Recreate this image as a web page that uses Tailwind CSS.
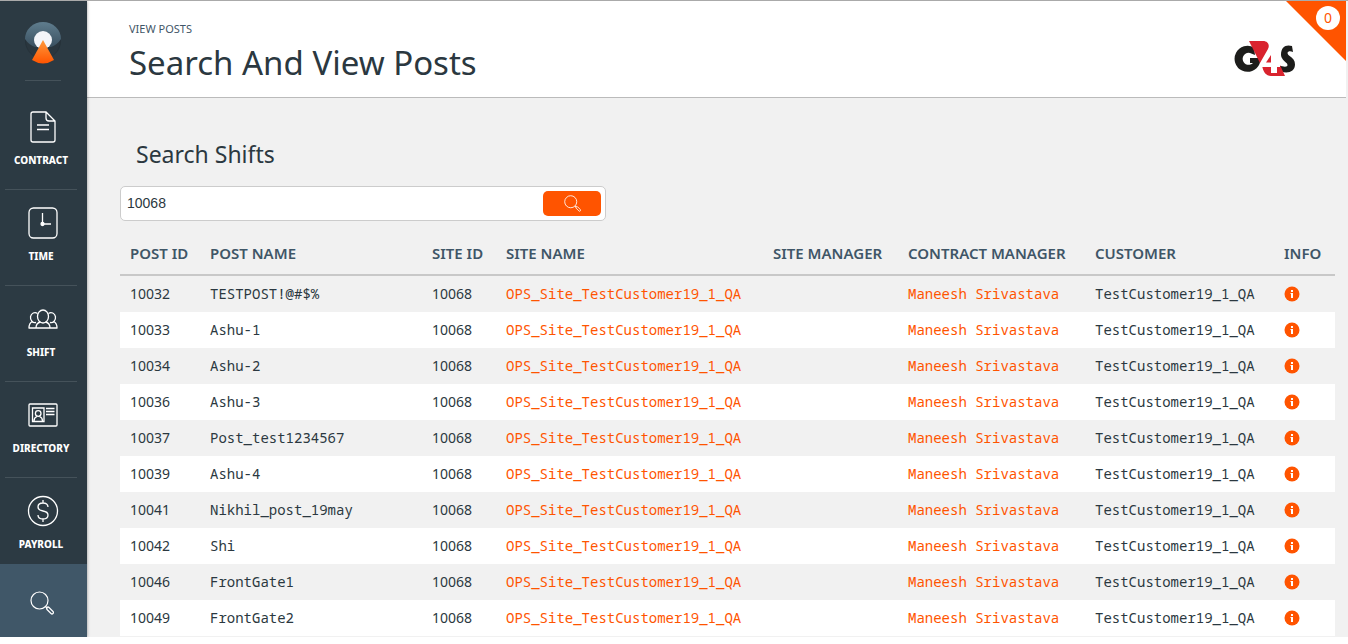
<!DOCTYPE html>
<html lang="en">
<head>
<meta charset="utf-8">
<title>Search And View Posts</title>
<script src="https://cdn.jsdelivr.net/npm/@tailwindcss/browser@4"></script>
</head>
<body class="h-screen overflow-hidden bg-white font-['Noto_Sans',sans-serif] text-[#2b3840]">
<svg class="hidden">
  <symbol id="search" viewBox="0 0 24 24"><g fill="none" stroke="currentColor" stroke-width="1.200"><circle cx="9.500" cy="9.500" r="8.500"/><path d="M15.500 15.500l2 2M17 18.500l4 4a1.300 1.300 0 0 0 2-2l-4-4a1.300 1.300 0 0 0-2 2z"/></g></symbol>
  <symbol id="info" viewBox="0 0 16 16"><circle cx="8" cy="8" r="7.500" fill="#ff5400"/><path fill="#fff" d="M7 4h2v2H7zM6.500 7H9v5H7V8h-.5z"/></symbol>
</svg>
<div class="flex h-[calc(100vh-7px)] overflow-hidden border-t border-[#aaaaaa] bg-[#f1f1f1]">
  <nav class="z-10 flex w-[87px] shrink-0 flex-col bg-[#2c3a43] text-[10px] font-extrabold text-white shadow-[0_0_3px_rgba(0,0,0,0.4)]">
    <a href="#" aria-label="Home" class="ml-[25px] flex h-20 w-9 flex-col items-center border-b border-[#45525a] pt-5">
      <svg class="h-11 w-9" viewBox="0 0 36 44">
        <defs>
          <linearGradient id="dome" x2="0" y2="1"><stop stop-color="#5f7d8e"/><stop offset="1" stop-color="#3a5060"/></linearGradient>
          <linearGradient id="beam" x2="0" y2="1"><stop stop-color="#ff9a3c"/><stop offset="1" stop-color="#ff5400"/></linearGradient>
        </defs>
        <circle cx="18" cy="20" r="17.500" fill="#2a363e" stroke="#26323a"/>
        <path d="M0 18a18 17 0 0 1 36 0q-4 6-10 8H10Q4 24 0 18z" fill="url(#dome)"/>
        <circle cx="18" cy="19" r="9" fill="#f3f5f9"/>
        <path d="M18 19l11 20q-11 7-22 0z" fill="url(#beam)"/>
      </svg>
    </a>
    <a href="#" class="mr-[10px] ml-[5px] flex h-[109px] flex-col items-center border-b border-[#45525a] pt-[30px]">
      <svg class="ml-[3px] h-8 w-8" viewBox="0 0 32 32" fill="none" stroke="#fff" stroke-width="1.300"><path d="M19 1H6a2 2 0 0 0-2 2v26a2 2 0 0 0 2 2h20a2 2 0 0 0 2-2V10zM19 1v6a3 3 0 0 0 3 3h6M10 14h12M10 18.500h12"/></svg>
      <span class="mt-[9px] leading-4">CONTRACT</span>
    </a>
    <a href="#" class="mr-[10px] ml-[5px] flex h-24 flex-col items-center border-b border-[#45525a] pt-[17px]">
      <svg class="ml-[3px] h-8 w-8" viewBox="0 0 32 32" fill="none" stroke="#fff" stroke-width="1.300"><rect x="2" y="1" width="28" height="30" rx="4.500"/><path d="M15.500 6v11H24"/><circle cx="15.500" cy="17" r="1.500" fill="#fff"/></svg>
      <span class="mt-[9px] leading-4">TIME</span>
    </a>
    <a href="#" class="mr-[10px] ml-[5px] flex h-24 flex-col items-center border-b border-[#45525a] pt-[17px]">
      <svg class="ml-[3px] h-8 w-8" viewBox="0 0 32 32" fill="none" stroke="#fff" stroke-width="1.300"><ellipse cx="16" cy="13.500" rx="5.500" ry="6.500"/><path d="M10.500 10.500A4.500 5 0 1 0 9 19.500M21.500 10.500A4.500 5 0 1 1 23 19.500M9 25q0-5 4.500-6M23 25q0-5-4.500-6M2 25q0-5 3.500-6.500M30 25q0-5-3.500-6.500M1.500 25h29"/></svg>
      <span class="mt-[9px] leading-4">SHIFT</span>
    </a>
    <a href="#" class="mr-[10px] ml-[5px] flex h-24 flex-col items-center border-b border-[#45525a] pt-[17px]">
      <svg class="ml-[3px] h-8 w-8" viewBox="0 0 32 32" fill="none" stroke="#fff" stroke-width="1.300"><rect x="2" y="5" width="28" height="22" rx="1"/><path d="M5.500 9H17v13.500H5.500zM19 9.500h8.500M19 12.500h8.500M19 15.500h8.500M7 22q0-3.500 3-4.500M15.500 22q0-3.500-3-4.500"/><circle cx="11.200" cy="14.500" r="2.800"/></svg>
      <span class="mt-[9px] leading-4">DIRECTORY</span>
    </a>
    <a href="#" class="mr-[10px] ml-[5px] flex h-[86px] shrink-0 flex-col items-center pt-[17px]">
      <svg class="ml-[3px] h-8 w-8" viewBox="0 0 32 32" fill="none" stroke="#fff" stroke-width="1.300"><circle cx="16" cy="16" r="14.500"/><path d="M16 5v3M16 24v3M21 12c0-2.500-2-4-5-4s-5 1.500-5 4 2 3.500 5 4 5 1.500 5 4-2 4-5 4-5-1.500-5-4"/></svg>
      <span class="mt-[9px] leading-4">PAYROLL</span>
    </a>
    <button type="button" aria-label="Search" class="flex grow items-center justify-center bg-[#405768] pt-1 pr-1"><svg class="h-6 w-6"><use href="#search"/></svg></button>
  </nav>

  <div class="min-w-0 grow">
    <header class="relative mr-[2px] flex h-[97px] items-start justify-between border-b border-[#bbbbbb] bg-white pr-[50px] pl-[42px]">
      <div>
        <p class="mt-5 text-[11px] leading-4 text-[#3f5667]">VIEW POSTS</p>
        <h1 class="mt-1 text-[33px] leading-[44px]">Search And View Posts</h1>
      </div>
      <svg class="mt-10 h-9 w-[62px]" viewBox="0 0 62 36" role="img" aria-label="G4S">
        <path fill="#1d1d1b" d="M20 6.500A13 13 0 1 0 25.500 23L27 17H16v5h3a6 6 0 1 1-3-10l5 2z"/>
        <path fill="#1d1d1b" d="M58 5l1 6C54 9 52 12 55 14.500c4 2.500 6 5 6 9 0 7-7 9.500-14 7l-2-6c6 2 10 1.500 8-2-3-3-6-5-6-9C47 6 52 3 58 5z"/>
        <path fill="#d9232e" d="M15 0h14c5 0 7 4 5 8l-8 14zM28 24h18l5 11H37c-5 0-8-4-9-11z"/>
        <path fill="#fff" d="M37 9h6v12.500h3V26h-3v6h-6v-6h-9v-4.500z"/>
        <path fill="#d9232e" d="M37 14v7.500h-5z"/>
      </svg>
      <div class="absolute top-0 right-0 h-[60px] w-[60px] bg-[#ff5400] [clip-path:polygon(0_0,100%_0,100%_100%)]"></div>
      <button type="button" class="absolute top-[5px] right-[6px] h-6 w-6 rounded-full bg-white text-sm text-[#ff5400]">0</button>
    </header>

    <main class="pr-[13px] pl-[33px]">
      <h2 class="pt-10 pl-4 text-[23px] leading-8">Search Shifts</h2>
      <form class="mt-4 flex h-[35px] w-2/5 items-center rounded-[5px] border border-[#cccccc] bg-white pr-1 pl-[6px]">
        <input type="text" aria-label="Search shifts" value="10068" class="h-full min-w-0 grow pb-[2px] font-['Liberation_Sans',sans-serif] text-sm outline-none">
        <button type="button" aria-label="Search" class="flex h-[25px] w-[58px] items-center justify-center rounded-[5px] bg-[#ff5400] text-white"><svg class="h-[17px] w-[17px]"><use href="#search"/></svg></button>
      </form>
      <table class="mt-3 w-full table-fixed border-separate border-spacing-0 text-left">
        <colgroup><col class="w-[80px]"><col class="w-[222px]"><col class="w-[74px]"><col class="w-[267px]"><col class="w-[135px]"><col class="w-[187px]"><col class="w-[189px]"><col class="w-[61px]"></colgroup>
        <thead class="text-[15px] whitespace-nowrap text-[#3f5667]">
          <tr class="[&>th]:h-[43px] [&>th]:border-b-2 [&>th]:border-[#c8c8c8] [&>th]:px-[10px] [&>th]:font-semibold"><th>POST ID</th><th>POST NAME</th><th>SITE ID</th><th>SITE NAME</th><th>SITE MANAGER</th><th>CONTRACT MANAGER</th><th>CUSTOMER</th><th>INFO</th></tr>
        </thead>
        <tbody id="rows" class="font-['Noto_Sans_Mono','DejaVu_Sans_Mono',monospace] text-sm whitespace-nowrap"></tbody>
      </table>
    </main>
  </div>
</div>
<script>
const posts = [['10032','TESTPOST!@#$%'],['10033','Ashu-1'],['10034','Ashu-2'],['10036','Ashu-3'],['10037','Post_test1234567'],['10039','Ashu-4'],['10041','Nikhil_post_19may'],['10042','Shi'],['10046','FrontGate1'],['10049','FrontGate2']];
document.getElementById('rows').innerHTML = posts.map(([id, name]) => `<tr class="h-9 even:bg-white [&>td]:px-[10px]"><td class="font-['Noto_Sans',sans-serif]">${id}</td><td>${name}</td><td class="font-['Noto_Sans',sans-serif]">10068</td><td><a href="#" class="text-[#ff5400]">OPS_Site_TestCustomer19_1_QA</a></td><td></td><td><a href="#" class="text-[#ff5400]">Maneesh Srivastava</a></td><td>TestCustomer19_1_QA</td><td><button type="button" aria-label="Info" class="block"><svg class="h-4 w-4"><use href="#info"/></svg></button></td></tr>`).join('');
</script>
</body>
</html>
